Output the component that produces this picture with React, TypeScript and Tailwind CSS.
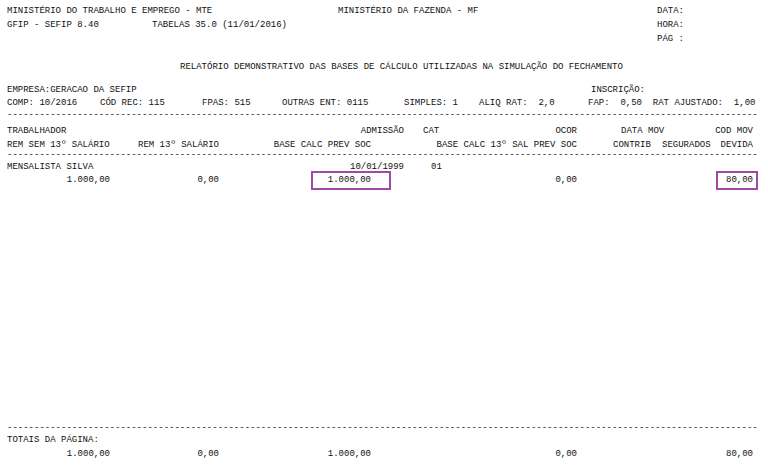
import type { ReactNode } from "react";
import clsx from "clsx";

const DASHES = "-".repeat(139);

function Cell({
  w,
  right,
  children,
}: {
  w?: string;
  right?: boolean;
  children?: ReactNode;
}) {
  return (
    <span className={clsx("shrink-0 whitespace-pre", w, right && "text-right")}>
      {children}
    </span>
  );
}

function Row({ className, children }: { className?: string; children: ReactNode }) {
  return <div className={clsx("flex items-center", className)}>{children}</div>;
}

function Rule({ className }: { className?: string }) {
  return (
    <div className={clsx("whitespace-pre w-[751px] h-[12px] leading-[12px]", className)}>
      {DASHES}
    </div>
  );
}

export default function App() {
  return (
    <div className="w-[768px] h-[465px] bg-white text-[#111] text-[9px] font-['Liberation_Mono',monospace] pl-[7px] pt-[4px] overflow-hidden">
      {/* cabeçalho */}
      <Row className="h-[14px] leading-[14px]">
        <Cell w="w-[331px]">MINISTÉRIO DO TRABALHO E EMPREGO - MTE</Cell>
        <Cell w="w-[319px]">MINISTÉRIO DA FAZENDA - MF</Cell>
        <Cell>DATA:</Cell>
      </Row>
      <Row className="h-[14px] leading-[14px]">
        <Cell w="w-[145px]">GFIP - SEFIP 8.40</Cell>
        <Cell w="w-[505px]">TABELAS 35.0 (11/01/2016)</Cell>
        <Cell>HORA:</Cell>
      </Row>
      <Row className="h-[14px] leading-[14px]">
        <Cell w="w-[650px]" />
        <Cell>PÁG :</Cell>
      </Row>

      <Row className="h-[14px] leading-[14px] mt-[14px] pl-[173px]">
        <Cell>
          RELATÓRIO DEMONSTRATIVO DAS BASES DE CÁLCULO UTILIZADAS NA SIMULAÇÃO DO FECHAMENTO
        </Cell>
      </Row>

      {/* empresa */}
      <Row className="h-[13px] leading-[13px] mt-[10px]">
        <Cell w="w-[584px]">EMPRESA:GERACAO DA SEFIP</Cell>
        <Cell>INSCRIÇÃO:</Cell>
      </Row>
      <Row className="h-[12px] leading-[12px]">
        <Cell w="w-[93px]">COMP: 10/2016</Cell>
        <Cell w="w-[102px]">CÓD REC: 115</Cell>
        <Cell w="w-[80px]">FPAS: 515</Cell>
        <Cell w="w-[122px]">OUTRAS ENT: 0115</Cell>
        <Cell w="w-[75px]">SIMPLES: 1</Cell>
        <Cell w="w-[109px]">ALIQ RAT:  2,0</Cell>
        <Cell w="w-[167px]" right>
          FAP:  0,50  RAT AJUSTADO:  1,00
        </Cell>
      </Row>
      <Rule />

      {/* títulos da tabela */}
      <Row className="h-[14px] leading-[14px] mt-[3px]">
        <Cell w="w-[100px]">TRABALHADOR</Cell>
        <Cell w="w-[297px]" right>
          ADMISSÃO
        </Cell>
        <Cell w="w-[19px]" />
        <Cell w="w-[30px]">CAT</Cell>
        <Cell w="w-[124px]" right>
          OCOR
        </Cell>
        <Cell w="w-[44px]" />
        <Cell w="w-[50px]">DATA MOV</Cell>
        <Cell w="w-[82px]" right>
          COD MOV
        </Cell>
      </Row>
      <Row className="h-[14px] leading-[14px]">
        <Cell w="w-[131px]">REM SEM 13º SALÁRIO</Cell>
        <Cell w="w-[100px]">REM 13º SALÁRIO</Cell>
        <Cell w="w-[133px]" right>
          BASE CALC PREV SOC
        </Cell>
        <Cell w="w-[206px]" right>
          BASE CALC 13º SAL PREV SOC
        </Cell>
        <Cell w="w-[36px]" />
        <Cell w="w-[49px]">CONTRIB</Cell>
        <Cell w="w-[50px]">SEGURADOS</Cell>
        <Cell w="w-[41px]" right>
          DEVIDA
        </Cell>
      </Row>
      <Rule className="-mt-[3px]" />

      {/* trabalhador */}
      <Row className="h-[14px] leading-[14px] -mt-[1px]">
        <Cell w="w-[100px]">MENSALISTA SILVA</Cell>
        <Cell w="w-[297px]" right>
          10/01/1999
        </Cell>
        <Cell w="w-[27px]" />
        <Cell>01</Cell>
      </Row>
      <Row className="relative h-[12px] leading-[12px]">
        <Cell w="w-[103px]" right>
          1.000,00
        </Cell>
        <Cell w="w-[109px]" right>
          0,00
        </Cell>
        <Cell w="w-[152px]" right>
          1.000,00
        </Cell>
        <Cell w="w-[206px]" right>
          0,00
        </Cell>
        <Cell w="w-[176px]" right>
          80,00
        </Cell>
        <div className="absolute left-[304px] top-[-3px] w-[80px] h-[19px] border-2 border-[#a349a4]" />
        <div className="absolute left-[709px] top-[-3px] w-[42px] h-[19px] border-2 border-[#a349a4]" />
      </Row>

      {/* totais */}
      <Rule className="mt-[236px]" />
      <Row className="h-[12px] leading-[12px]">
        <Cell>TOTAIS DA PÁGINA:</Cell>
      </Row>
      <Row className="h-[14px] leading-[14px] mt-[1px]">
        <Cell w="w-[103px]" right>
          1.000,00
        </Cell>
        <Cell w="w-[109px]" right>
          0,00
        </Cell>
        <Cell w="w-[152px]" right>
          1.000,00
        </Cell>
        <Cell w="w-[206px]" right>
          0,00
        </Cell>
        <Cell w="w-[176px]" right>
          80,00
        </Cell>
      </Row>
    </div>
  );
}
